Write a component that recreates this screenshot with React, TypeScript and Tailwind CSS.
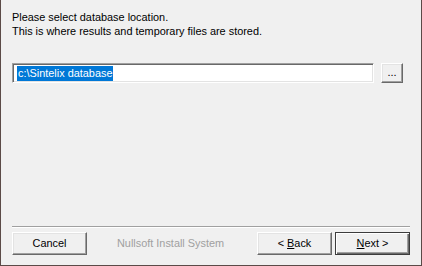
const raised =
  "border border-t-white border-l-white border-r-[#696969] border-b-[#696969] shadow-[inset_-1px_-1px_0_#a0a0a0,inset_1px_1px_0_#e3e3e3] bg-[#f0f0f0]";

const App = () => {
  return (
    <div
      className="w-[422px] h-[266px] bg-[#f0f0f0] border-l border-r border-b border-[#5b4a47] flex flex-col text-[10.9px] text-black"
      style={{ fontFamily: '"Liberation Sans", Arial, sans-serif' }}
    >
      <div className="pl-[11px] pt-[10px] leading-[14px]">
        <p>Please select database location.</p>
        <p>This is where results and temporary files are stored.</p>
      </div>

      <div className="flex items-start pl-[11px] mt-[25px]">
        <div className="w-[362px] h-[20px] bg-white border border-t-[#a0a0a0] border-l-[#a0a0a0] border-r-white border-b-white shadow-[inset_1px_1px_0_#696969,inset_-1px_-1px_0_#e3e3e3] flex items-center pl-[4px]">
          <span className="bg-[#0078d7] text-white leading-[15px] px-[1px]">c:\Sintelix database</span>
        </div>
        <button className={`ml-[7px] w-[22px] h-[20px] ${raised} flex items-center justify-center leading-none pb-[2px]`}>
          ...
        </button>
      </div>

      <div className="flex-1" />

      <div className="ml-[11px] w-[398px] border-t border-t-[#a0a0a0] border-b border-b-white" />

      <div className="flex items-center pl-[11px] mt-[4px] mb-[10px]">
        <button className={`w-[75px] h-[23px] ${raised}`}>Cancel</button>
        <span className="ml-[30px] text-[#a0a0a0]">Nullsoft Install System</span>
        <div className="flex-1" />
        <button className={`w-[75px] h-[23px] ${raised}`}>
          &lt; <span className="underline">B</span>ack
        </button>
        <button className="ml-[3px] mr-[11px] w-[75px] h-[23px] border border-[#3c3c3c] bg-[#f0f0f0] shadow-[inset_1px_1px_0_#fff,inset_-1px_-1px_0_#696969,inset_-2px_-2px_0_#a0a0a0]">
          <span className="underline">N</span>ext &gt;
        </button>
      </div>
    </div>
  );
};

export default App;
